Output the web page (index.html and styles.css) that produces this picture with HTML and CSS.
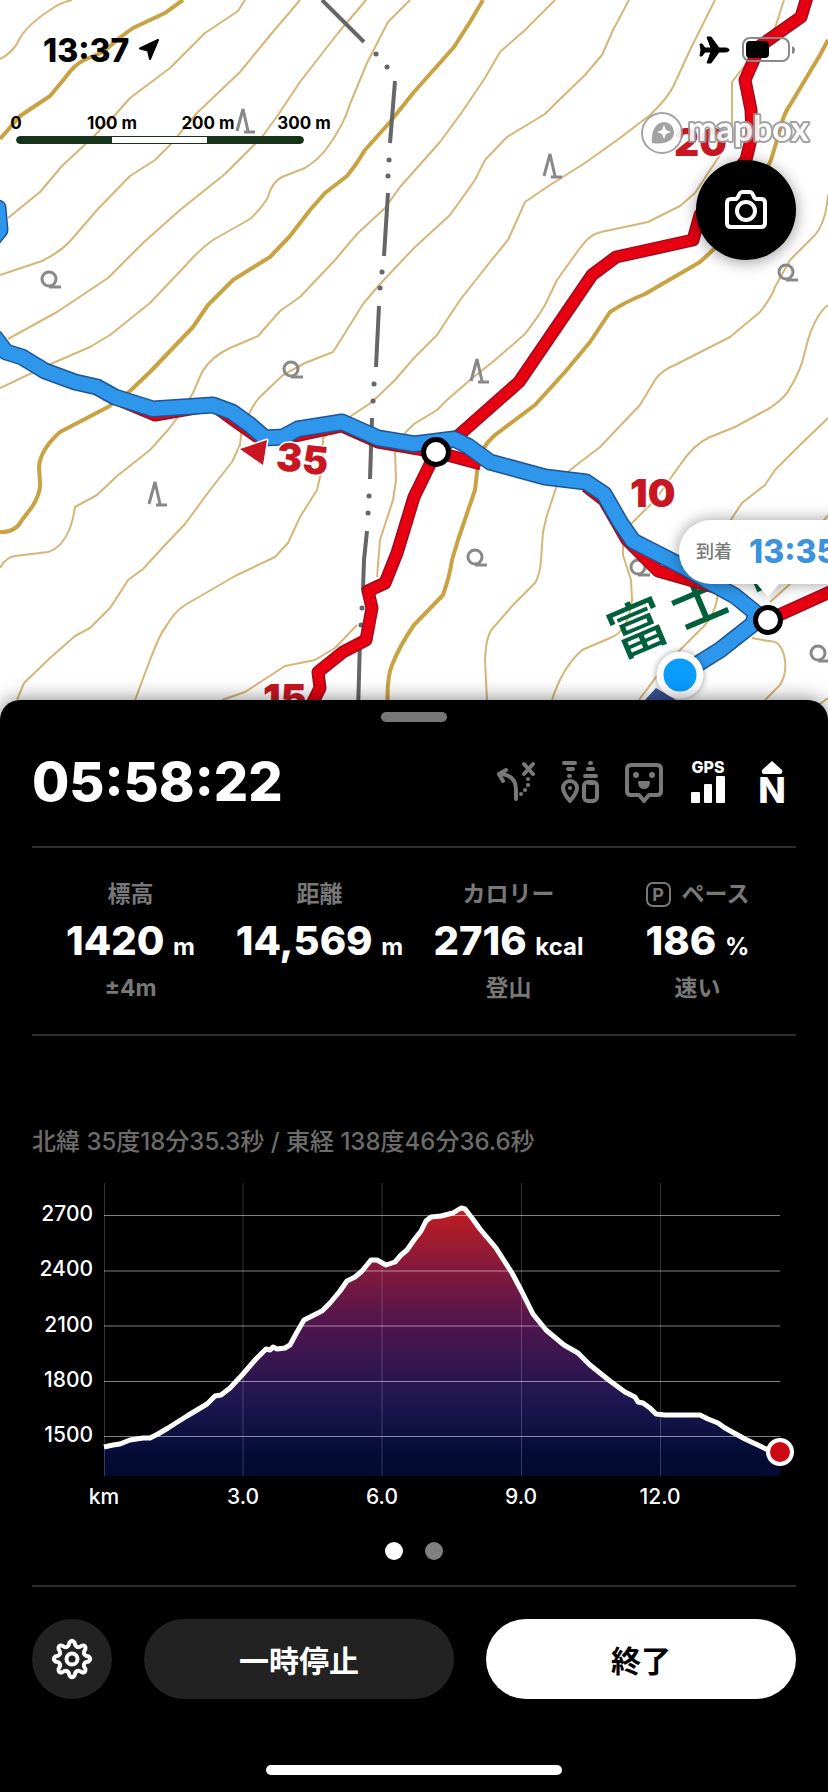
FILE: index.html
```html
<!DOCTYPE html>
<html lang="ja">
<head>
  <meta charset="UTF-8">
  <meta name="viewport" content="width=device-width, initial-scale=1.0">
  <title>登山中</title>
  <link rel="stylesheet" href="styles.css">
</head>
<body>
  <main class="map">
    <svg class="map-canvas" viewBox="0 0 828 720" preserveAspectRatio="xMidYMin slice" aria-hidden="true">
      <defs>
        <g id="conifer"><path d="M-6 22L0 0L5 22M1 23H12"/></g>
        <g id="broadleaf"><circle r="7"/><path d="M0 8H12"/></g>
      </defs>

      <!-- contour lines -->
      <g class="contours">
        <path d="M0 59Q14 52 20 38Q28 24 53 8Q62 2 72 0"/>
        <path d="M8 218L40 192L62 166L93 137L115 115L130 98L170 68L205 33L238 11L245 0"/>
        <path d="M0 275L42 261Q62 251 72 239L97 210L130 176L155 160L172 143L180 133L197 113L240 72L272 33L300 0"/>
        <path d="M8 339L57 312L108 278L143 243L180 210L225 174L262 137L278 115L300 82L338 33L366 0"/>
        <path d="M0 388L53 363L90 347L110 335L115 331L150 303L187 264Q200 249 213 240L250 219Q262 208 268 197Q272 182 282 177L305 168Q318 160 327 148Q344 125 350 104L367 63L388 22L410 0"/>
        <path d="M0 568Q6 557 15 556L48 552Q62 548 70 528Q73 520 75 507L97 495L117 476L150 450L168 430L178 417L193 393L202 372Q212 356 230 348L258 336L280 311L300 297L335 260L357 234L385 208L400 187L440 142L462 112L485 78L500 52L525 30L555 0"/>
        <path d="M17 700L24 683L50 658L75 636L90 628L110 608Q122 590 128 580L143 569L165 545L185 524L210 490L232 462L240 445L242 425L250 412Q256 400 262 395L283 375L305 363L333 352L345 333L363 304L380 284L414 248L450 215L475 180L485 160L507 137L545 114L557 102L585 75L602 55L613 30L629 0"/>
        <path d="M135 700L150 660Q160 634 165 628Q174 612 185 605L235 576L275 557L288 543L300 517L317 490L322 468L323 438L345 420L372 402L395 380L414 358L437 335L460 300L490 262L508 240L517 220L525 202L550 185L585 163L620 138L650 115Q668 98 674 85L690 50L715 0"/>
        <path d="M222 700L245 692L285 666L315 660L335 648L357 625"/>
        <path d="M377 577L380 540L393 500L396 480L395 453Q398 438 414 424L437 410L447 400L470 380L495 360L525 334Q540 314 545 305L557 280L580 248Q590 234 601 232L648 222L680 206L695 193L720 155L732 125V82L745 65L775 28L784 0"/>
        <path d="M487 700L485 660Q486 635 493 628L513 605L535 583Q540 575 541 560L543 532L547 515L557 485L570 470L600 447L640 405L655 380Q662 370 675 365L730 337L760 312Q773 295 775 287L790 260L815 235Q826 222 828 195"/>
        <path d="M552 700Q562 668 582 650L610 638Q628 632 632 600L631 580L623 555Q622 532 633 522L655 500L680 465Q694 444 710 437L735 427L770 408Q786 397 790 388Q801 370 804 355L808 340Q816 314 828 305"/>
        <path d="M639 700L665 665L700 630Q717 615 718 590L724 530L742 503L765 485L775 470L800 445L828 418"/>
        <path d="M765 700L780 685Q788 672 784 655Q780 640 768 641L752 638M770 602L800 575M812 535L828 515M820 704L828 698"/>
      </g>
      <g class="contours index">
        <path d="M0 139L20 116L50 96L65 78Q74 65 84 60L103 52L122 36L133 28L165 13Q176 5 183 0"/>
        <path d="M0 532Q15 533 22 520L32 507Q41 493 40 482L39 467Q40 450 60 432L108 407L130 391L150 372L193 327L208 305L233 280L270 257L290 236L310 210L325 193L347 176Q357 164 365 150L390 122L414 92L454 47L470 22L483 0"/>
        <path d="M388 712Q386 680 392 665Q400 645 414 625L443 595Q450 575 452 560L458 540L475 490L479 455L488 442L495 435L535 405L565 372L590 342L610 312Q625 302 645 294L700 262L740 225L771 160L780 130Q783 115 790 105L820 55L828 40"/>
      </g>

      <!-- prefecture border -->
      <g class="border">
        <path d="M322 0L364 42M395 81L390 143M388 193L384 256M379 306L376 367M372 418L370 479M367 531L364 560L363 590M360 640L358 712"/>
        <path class="border-dots" d="M376 54h.1M387 67h.1M389 160h.1M388 176h.1M382 272h.1M380 288h.1M374 384h.1M373 401h.1M369 496h.1M368 513h.1M362 608h.1M361 625h.1"/>
      </g>

      <g class="trees">
        <use href="#conifer" x="243" y="109"/>
        <use href="#conifer" x="550" y="154"/>
        <use href="#conifer" x="477" y="359"/>
        <use href="#conifer" x="155" y="482"/>
        <use href="#broadleaf" x="49" y="279"/>
        <use href="#broadleaf" x="786" y="272"/>
        <use href="#broadleaf" x="291" y="369"/>
        <use href="#broadleaf" x="475" y="557"/>
        <use href="#broadleaf" x="638" y="567"/>
        <use href="#broadleaf" x="818" y="653"/>
      </g>

      <g class="place">
        <text transform="translate(638 628) rotate(-23)" y="21">富</text>
        <text transform="translate(699 600) rotate(-23)" y="21">士</text>
        <text transform="translate(765 561) rotate(-23)" y="21">宮</text>
      </g>

      <!-- trails -->
      <g id="trails">
        <path class="trail-edge" d="M808 -6L801 17L760 46L745 80L751 110L752 135L746 160L700 215L693 240L616 257L592 275L534 360L519 382L459 435L436 452L414 497L397 553L385 583L368 591L372 608L366 640L343 652L318 672L320 688L308 712M105 394L155 415L213 405L235 421L262 440L300 435L342 426L378 442L436 452L481 464M586 486L604 500L627 540L658 571L725 590L768 620L832 591"/>
        <path class="trail" d="M808 -6L801 17L760 46L745 80L751 110L752 135L746 160L700 215L693 240L616 257L592 275L534 360L519 382L459 435L436 452L414 497L397 553L385 583L368 591L372 608L366 640L343 652L318 672L320 688L308 712M105 394L155 415L213 405L235 421L262 440L300 435L342 426L378 442L436 452L481 464M586 486L604 500L627 540L658 571L725 590L768 620L832 591"/>
      </g>

      <!-- walked route -->
      <path class="heading" d="M634 712L656 688L676 700L668 712Z"/>
      <path class="route-edge" d="M-6 336L6 352L22 357L45 371L75 382L97 387L115 397L153 409L213 405L232 412L250 425L265 438L283 437L298 429L342 422L360 430L378 438L414 444L454 439L468 446L490 462L545 477L586 482L604 494L620 522L633 541L682 566L706 580L735 596L756 613L753 624L720 650L680 675M-8 206L-2 208L0 230L-8 240"/>
      <path class="route" d="M-6 336L6 352L22 357L45 371L75 382L97 387L115 397L153 409L213 405L232 412L250 425L265 438L283 437L298 429L342 422L360 430L378 438L414 444L454 439L468 446L490 462L545 477L586 482L604 494L620 522L633 541L682 566L706 580L735 596L756 613L753 624L720 650L680 675M-8 206L-2 208L0 230L-8 240"/>

      <g class="minutes">
        <text x="674" y="156">20</text>
        <text x="630" y="507">10</text>
        <text x="263" y="712">15</text>
        <text transform="translate(275 470) rotate(6)">35</text>
        <path d="M240 449L267 440L263 465Z"/>
      </g>

      <circle class="poi" cx="436" cy="452" r="12.5"/>
      <circle class="poi" cx="768" cy="620" r="12.5"/>
      <circle class="position" cx="680" cy="675" r="20"/>

      <!-- arrival callout -->
      <g class="callout">
        <path d="M711 520H900V584H779L768 597L757 584H711A32 32 0 0 1 711 520Z"/>
        <text class="callout-label" x="696" y="558">到着</text>
        <text class="callout-time" x="749" y="563">13:35</text>
      </g>
    </svg>

    <div class="status-bar">
      <div class="clock">
        <time>13:37</time>
        <svg width="24" height="24" viewBox="0 0 24 24" aria-hidden="true"><path d="M21 2L3 10.500L11 12.500L13 21Z" fill="#000" stroke="#000" stroke-width="2" stroke-linejoin="round"/></svg>
      </div>
      <div class="status-icons">
        <svg width="32" height="28" viewBox="0 0 32 28" aria-label="機内モード"><path d="M30 14C30 12.500 28 12 26 12H20L12 1H8L12 12H6L3 8H1L2 14L1 20H3L6 16H12L8 27H12L20 16H26C28 16 30 15.500 30 14Z" stroke="#000"/></svg>
        <svg width="54" height="26" viewBox="0 0 54 26" aria-label="バッテリー"><rect x="1" y="1" width="46" height="23" rx="7" fill="none" stroke="#888" stroke-width="2"/><rect x="4" y="4" width="23" height="17" rx="4"/><path d="M50 9Q53 10 53 13T50 17Z" fill="#888"/></svg>
      </div>
    </div>

    <div class="map-info">
      <div class="scale">
        <div class="scale-labels"><span>0</span><span>100 m</span><span>200 m</span><span>300 m</span></div>
        <div class="scale-bar"></div>
      </div>
      <svg class="mapbox" width="182" height="48" viewBox="0 0 182 48" role="img" aria-label="mapbox">
        <circle cx="22" cy="24" r="20" fill="#fff" stroke="#999" stroke-width="2"/>
        <path d="M12 34C11 24 14 14 24 13A10 10 0 0 1 34 23C34 32 25 36 12 34Z" fill="#999"/>
        <path d="M24 16L26 21L31 23L26 25L24 30L22 25L17 23L22 21Z" fill="#fff"/>
        <text x="48" y="32">mapbox</text>
      </svg>
    </div>

    <button class="camera" type="button" aria-label="カメラ">
      <svg width="48" height="48" viewBox="0 0 48 48"><path d="M9 13H13Q15 13 16 11Q18 6 20 6H28Q30 6 32 11Q33 13 35 13H39Q43 13 43 17V37Q43 41 39 41H9Q5 41 5 37V17Q5 13 9 13Z"/><circle cx="24" cy="25" r="9"/></svg>
    </button>
  </main>

  <section class="sheet">
    <div class="handle"></div>

    <div class="summary">
      <h1 class="timer">05:58:22</h1>
      <div class="indicators">
        <svg viewBox="0 0 48 48" width="48" height="48" role="img" aria-label="ルート外れ">
          <g fill="none" stroke="#787878" stroke-width="4" stroke-linecap="round" stroke-linejoin="round"><path d="M24 41V32Q24 17 8 16M14 12L7 16L11 23M32 6L41 16M41 6L32 16"/></g>
          <g fill="#787878"><circle cx="36" cy="21" r="2"/><circle cx="36" cy="27" r="2"/><circle cx="33" cy="32" r="2"/><circle cx="29" cy="36" r="2"/></g>
        </svg>
        <svg viewBox="0 0 48 48" width="48" height="48" role="img" aria-label="位置共有">
          <g fill="none" stroke="#787878" stroke-width="4" stroke-linecap="round"><path d="M8 5H19M12 11H17M13 18H14M34 5H35M32 11H37M29 18H40"/></g>
          <g fill="none" stroke="#787878" stroke-width="4" stroke-linejoin="round"><path d="M14 43Q7 35 7 30A7 7 0 0 1 21 30Q21 35 14 43Z"/><rect x="28" y="24" width="13" height="19" rx="4"/><path d="M32 25H38"/></g>
          <circle cx="14" cy="30" r="2" fill="#787878"/>
        </svg>
        <svg viewBox="0 0 48 48" width="48" height="48" role="img" aria-label="こんにちは通信">
          <path d="M11 7H37Q41 7 41 11V33Q41 37 37 37H29L24 43L19 37H11Q7 37 7 33V11Q7 7 11 7Z" fill="none" stroke="#787878" stroke-width="4" stroke-linejoin="round"/>
          <g fill="#787878"><circle cx="16" cy="17" r="3"/><circle cx="32" cy="17" r="3"/><path d="M19 23H29Q30 23 30 25Q29 31 24 31T18 25Q18 23 19 23Z"/></g>
        </svg>
        <svg viewBox="0 0 48 48" width="48" height="48" role="img" aria-label="GPS">
          <text class="gps" x="24" y="15" text-anchor="middle">GPS</text>
          <g fill="#fff"><rect x="7" y="34" width="9" height="11" rx="1"/><rect x="20" y="26" width="8" height="19" rx="1"/><rect x="32" y="18" width="9" height="27" rx="1"/></g>
        </svg>
        <svg viewBox="0 0 48 48" width="48" height="48" role="img" aria-label="北">
          <path d="M24 3L34 12Q35 16 32 16H16Q13 16 14 12Z" fill="#fff"/>
          <text class="north" x="24" y="45" text-anchor="middle">N</text>
        </svg>
      </div>
    </div>

    <div class="stats">
      <div class="stat">
        <div class="label">標高</div>
        <div class="value">1420 <small>m</small></div>
        <div class="label">±4m</div>
      </div>
      <div class="stat">
        <div class="label">距離</div>
        <div class="value">14,569 <small>m</small></div>
      </div>
      <div class="stat">
        <div class="label">カロリー</div>
        <div class="value">2716 <small>kcal</small></div>
        <div class="label">登山</div>
      </div>
      <div class="stat">
        <div class="label"><span class="badge">P</span>ペース</div>
        <div class="value">186 <small>%</small></div>
        <div class="label">速い</div>
      </div>
    </div>

    <p class="coords">北緯 35度18分35.3秒 / 東経 138度46分36.6秒</p>

    <svg class="chart" viewBox="32 1180 764 340" role="img" aria-label="標高グラフ">
      <defs>
        <linearGradient id="elevation" gradientUnits="userSpaceOnUse" x1="0" y1="1210" x2="0" y2="1477">
          <stop offset="0" stop-color="#c01c20"/>
          <stop offset="0.200" stop-color="#8a1a3a"/>
          <stop offset="0.450" stop-color="#4c154f"/>
          <stop offset="0.720" stop-color="#1e1650"/>
          <stop offset="0.920" stop-color="#040c36"/>
          <stop offset="1" stop-color="#020a30"/>
        </linearGradient>
      </defs>
      <path fill="url(#elevation)" d="M104 1448L113 1446L120 1445L130 1441L143 1439L150 1439L158 1435L168 1429L187 1417L207 1405L215 1397L221 1396L230 1389L243 1375L256 1360L266 1350L285 1350L290 1346L297 1333L304 1321L310 1318L322 1312L330 1304L340 1292L347 1282L355 1278L362 1272L371 1261L377 1261L386 1266L395 1263L401 1256L407 1251L414 1241L421 1232L426 1222L431 1218L441 1217L453 1214L461 1209L465 1210L472 1219L480 1230L496 1249L512 1274L521 1291L533 1315L546 1331L564 1346L578 1354L590 1366L610 1382L625 1393L635 1398L643 1404L656 1415L700 1416L718 1424L745 1440L768 1451L780 1453V1477H104Z"/>
      <path class="grid-y" d="M104 1216.500H780M104 1272H780M104 1327H780M104 1382.500H780M104 1437.500H780"/>
      <path class="grid-x" d="M104.500 1184V1477M243 1184V1477M382 1184V1477M521.500 1184V1477M660.500 1184V1477"/>
      <path class="profile" d="M104 1448L113 1446L120 1445L130 1441L143 1439L150 1439L158 1435L168 1429L187 1417L207 1405L215 1397L221 1396L230 1389L243 1375L256 1360L266 1350L270 1351L273 1348L277 1350L285 1349L290 1346L297 1333L304 1321L310 1318L322 1312L330 1304L340 1292L347 1282L355 1278L362 1272L371 1261L377 1261L386 1266L395 1263L401 1256L407 1251L414 1241L421 1232L426 1222L431 1218L441 1217L453 1214L461 1209L465 1210L472 1219L480 1230L496 1249L512 1274L521 1291L533 1315L546 1331L564 1346L578 1354L590 1366L610 1382L625 1393L635 1398L638 1403L643 1404L650 1409L656 1415L665 1416L700 1416L708 1420L718 1424L725 1429L745 1440L760 1447L768 1451L780 1453"/>
      <circle class="now" cx="780" cy="1453" r="12"/>
      <g class="axis axis-y">
        <text x="93" y="1222">2700</text>
        <text x="93" y="1277">2400</text>
        <text x="93" y="1333">2100</text>
        <text x="93" y="1388">1800</text>
        <text x="93" y="1443">1500</text>
      </g>
      <g class="axis axis-x">
        <text x="104" y="1505">km</text>
        <text x="243" y="1505">3.0</text>
        <text x="382" y="1505">6.0</text>
        <text x="521" y="1505">9.0</text>
        <text x="660" y="1505">12.0</text>
      </g>
    </svg>

    <div class="pager"><span class="dot active"></span><span class="dot"></span></div>

    <div class="actions">
      <button class="settings" type="button" aria-label="設定">
        <svg width="44" height="44" viewBox="-22 -22 44 44"><path d="M-2.500 -16.500Q0 -20 2.500 -16.500Q3.800 -9.200 9.900 -13.400Q14.100 -14.100 13.400 -9.900Q9.200 -3.800 16.500 -2.500Q20 0 16.500 2.500Q9.200 3.800 13.400 9.900Q14.100 14.100 9.900 13.400Q3.800 9.200 2.500 16.500Q0 20 -2.500 16.500Q-3.800 9.200 -9.900 13.400Q-14.100 14.100 -13.400 9.900Q-9.200 3.800 -16.500 2.500Q-20 0 -16.500 -2.500Q-9.200 -3.800 -13.400 -9.900Q-14.100 -14.100 -9.900 -13.400Q-3.800 -9.200 -2.500 -16.500Z"/><circle r="5.500"/></svg>
      </button>
      <button class="pause" type="button">一時停止</button>
      <button class="finish" type="button">終了</button>
    </div>

    <div class="home-indicator"></div>
  </section>
</body>
</html>
```
FILE: styles.css
```css
* {
  box-sizing: border-box;
}
body {
  margin: 0;
  background: #000;
  color: #fff;
  font-family: Inter, "Noto Sans CJK JP", sans-serif;
}
button {
  padding: 0;
  border: none;
  font: inherit;
  cursor: pointer;
}
svg {
  display: block;
}

/* map */
.map {
  position: relative;
  display: flex;
  flex-direction: column;
  min-height: 720px;
  background: #fff;
  color: #000;
  overflow: hidden;
}
.map-canvas {
  position: absolute;
  inset: 0;
  width: 100%;
  height: 100%;
}
.contours {
  fill: none;
  stroke: #d6b678;
  stroke-width: 2;
  stroke-linejoin: round;
}
.contours.index {
  stroke: #c9a243;
  stroke-width: 4;
}
.border {
  fill: none;
  stroke: #666;
  stroke-width: 4;
}
.border-dots {
  stroke-width: 5;
  stroke-linecap: round;
}
.trees {
  fill: none;
  stroke: #888;
  stroke-width: 3;
}
.place {
  fill: #00603c;
  font-size: 58px;
  font-weight: 500;
  text-anchor: middle;
}
.trail,
.trail-edge,
.route,
.route-edge {
  fill: none;
  stroke-linejoin: round;
}
.trail-edge {
  stroke: #a00c1c;
  stroke-width: 13;
}
.trail {
  stroke: #e60012;
  stroke-width: 10;
}
.route-edge {
  stroke: #1c5494;
  stroke-width: 17;
}
.route {
  stroke: #2e97ec;
  stroke-width: 14;
}
.minutes {
  fill: #c81622;
  stroke: #fff;
  stroke-width: 3;
  stroke-linejoin: round;
  paint-order: stroke;
  font-size: 39px;
  font-weight: 900;
}
.heading {
  fill: #3a549c;
}
.poi {
  fill: #fff;
  stroke: #000;
  stroke-width: 5;
}
.position {
  fill: #0a9cff;
  stroke: #fff;
  stroke-width: 7;
  filter: drop-shadow(0 0 3px rgba(0, 0, 0, 0.4));
}
.callout path {
  fill: #fff;
  filter: drop-shadow(0 0 8px rgba(0, 0, 0, 0.4));
}
.callout-label {
  fill: #777;
  font-size: 18px;
  font-weight: 500;
}
.callout-time {
  fill: #3c92dc;
  font-size: 32px;
  font-weight: 800;
}

.status-bar {
  position: relative;
  display: flex;
  justify-content: space-between;
  align-items: center;
  height: 100px;
  padding: 0 32px 0 43px;
}
.clock,
.status-icons {
  display: flex;
  align-items: center;
  gap: 8px;
}
.clock time {
  font-size: 32px;
  font-weight: 800;
}
.status-icons {
  gap: 11px;
}
.map-info {
  position: relative;
  display: flex;
  justify-content: space-between;
  height: 60px;
  padding: 9px 6px 0 0;
}
.scale {
  padding-top: 5px;
  overflow: hidden;
}
.scale-labels {
  display: flex;
  margin-left: -32px;
  font-size: 17px;
  font-weight: 700;
  line-height: 18px;
  text-align: center;
}
.scale-labels span {
  width: 96px;
}
.scale-bar {
  width: 288px;
  height: 8px;
  margin: 4px 0 0 16px;
  border: 1px solid #17331a;
  border-radius: 4px;
  background: linear-gradient(to right, #17331a 33.3%, #fff 33.3%, #fff 66.6%, #17331a 66.6%);
}
.mapbox {
  opacity: 0.9;
}
.mapbox text {
  fill: #fff;
  stroke: #999;
  stroke-width: 4;
  stroke-linejoin: round;
  paint-order: stroke;
  font-family: Lato, sans-serif;
  font-size: 34px;
  font-weight: 700;
}
.camera {
  position: relative;
  display: flex;
  align-items: center;
  justify-content: center;
  align-self: flex-end;
  width: 100px;
  height: 100px;
  margin-right: 32px;
  border-radius: 50%;
  background: #000;
  box-shadow: 0 2px 16px rgba(0, 0, 0, 0.4);
}
.camera svg {
  fill: none;
  stroke: #fff;
  stroke-width: 4;
  stroke-linejoin: round;
}

/* bottom sheet */
.sheet {
  position: relative;
  margin-top: -20px;
  padding: 12px 32px 16px;
  border-radius: 20px 20px 0 0;
  background: #000;
  box-shadow: 0 0 20px rgba(0, 0, 0, 0.5);
}
.handle {
  width: 66px;
  height: 10px;
  margin: 0 auto 36px;
  border-radius: 5px;
  background: #777;
}
.summary {
  display: flex;
  justify-content: space-between;
  align-items: center;
  height: 90px;
  padding-bottom: 40px;
  border-bottom: 2px solid #2c2c2c;
}
.timer {
  margin: 0;
  font-size: 54px;
  font-weight: 800;
  line-height: 48px;
}
.indicators {
  display: flex;
  gap: 16px;
}
.gps {
  fill: #fff;
  font-size: 16px;
  font-weight: 800;
}
.north {
  fill: #fff;
  font-size: 36px;
  font-weight: 800;
}
.stats {
  display: grid;
  grid-template-columns: repeat(4, 1fr);
  padding: 32px 4px;
  border-bottom: 2px solid #2c2c2c;
}
.stat {
  display: flex;
  flex-direction: column;
  gap: 9px;
  align-items: center;
}
.label {
  display: flex;
  align-items: center;
  gap: 11px;
  height: 28px;
  color: #787878;
  font-size: 23px;
  font-weight: 700;
  line-height: 28px;
}
.badge {
  width: 25px;
  height: 25px;
  border: 2px solid #787878;
  border-radius: 7px;
  font-size: 18px;
  line-height: 21px;
  text-align: center;
}
.value {
  height: 48px;
  font-size: 40px;
  font-weight: 800;
  line-height: 48px;
  white-space: nowrap;
}
.value small {
  font-size: 24px;
  font-weight: 700;
}
.coords {
  margin: 91px 0 22px;
  color: #6c6c6c;
  font-size: 24px;
  font-weight: 500;
  line-height: 30px;
}
.chart {
  width: 100%;
  height: auto;
}
.grid-y {
  stroke: rgba(255, 255, 255, 0.5);
}
.grid-x {
  stroke: rgba(255, 255, 255, 0.2);
}
.profile {
  fill: none;
  stroke: #fff;
  stroke-width: 5;
  stroke-linejoin: round;
}
.now {
  fill: #cc0a14;
  stroke: #fff;
  stroke-width: 4;
}
.axis {
  fill: #fff;
  font-size: 21px;
  font-weight: 500;
}
.axis-y {
  text-anchor: end;
}
.axis-x {
  text-anchor: middle;
}
.pager {
  display: flex;
  justify-content: center;
  gap: 22px;
  padding: 23px 0 25px;
  border-bottom: 2px solid #2c2c2c;
}
.dot {
  width: 18px;
  height: 18px;
  border-radius: 50%;
  background: #808080;
}
.dot.active {
  background: #fff;
}
.actions {
  display: flex;
  gap: 32px;
  padding: 32px 0 66px;
}
.actions button {
  display: flex;
  flex: 1;
  align-items: center;
  justify-content: center;
  height: 80px;
  border-radius: 40px;
  background: #222;
  color: #fff;
  font-size: 30px;
  font-weight: 700;
}
.actions .settings {
  flex: 0 0 80px;
}
.settings svg {
  fill: none;
  stroke: #fff;
  stroke-width: 4;
}
.actions .finish {
  background: #fff;
  color: #000;
}
.home-indicator {
  width: 296px;
  height: 10px;
  margin: 0 auto;
  border-radius: 5px;
  background: #fff;
}
```
